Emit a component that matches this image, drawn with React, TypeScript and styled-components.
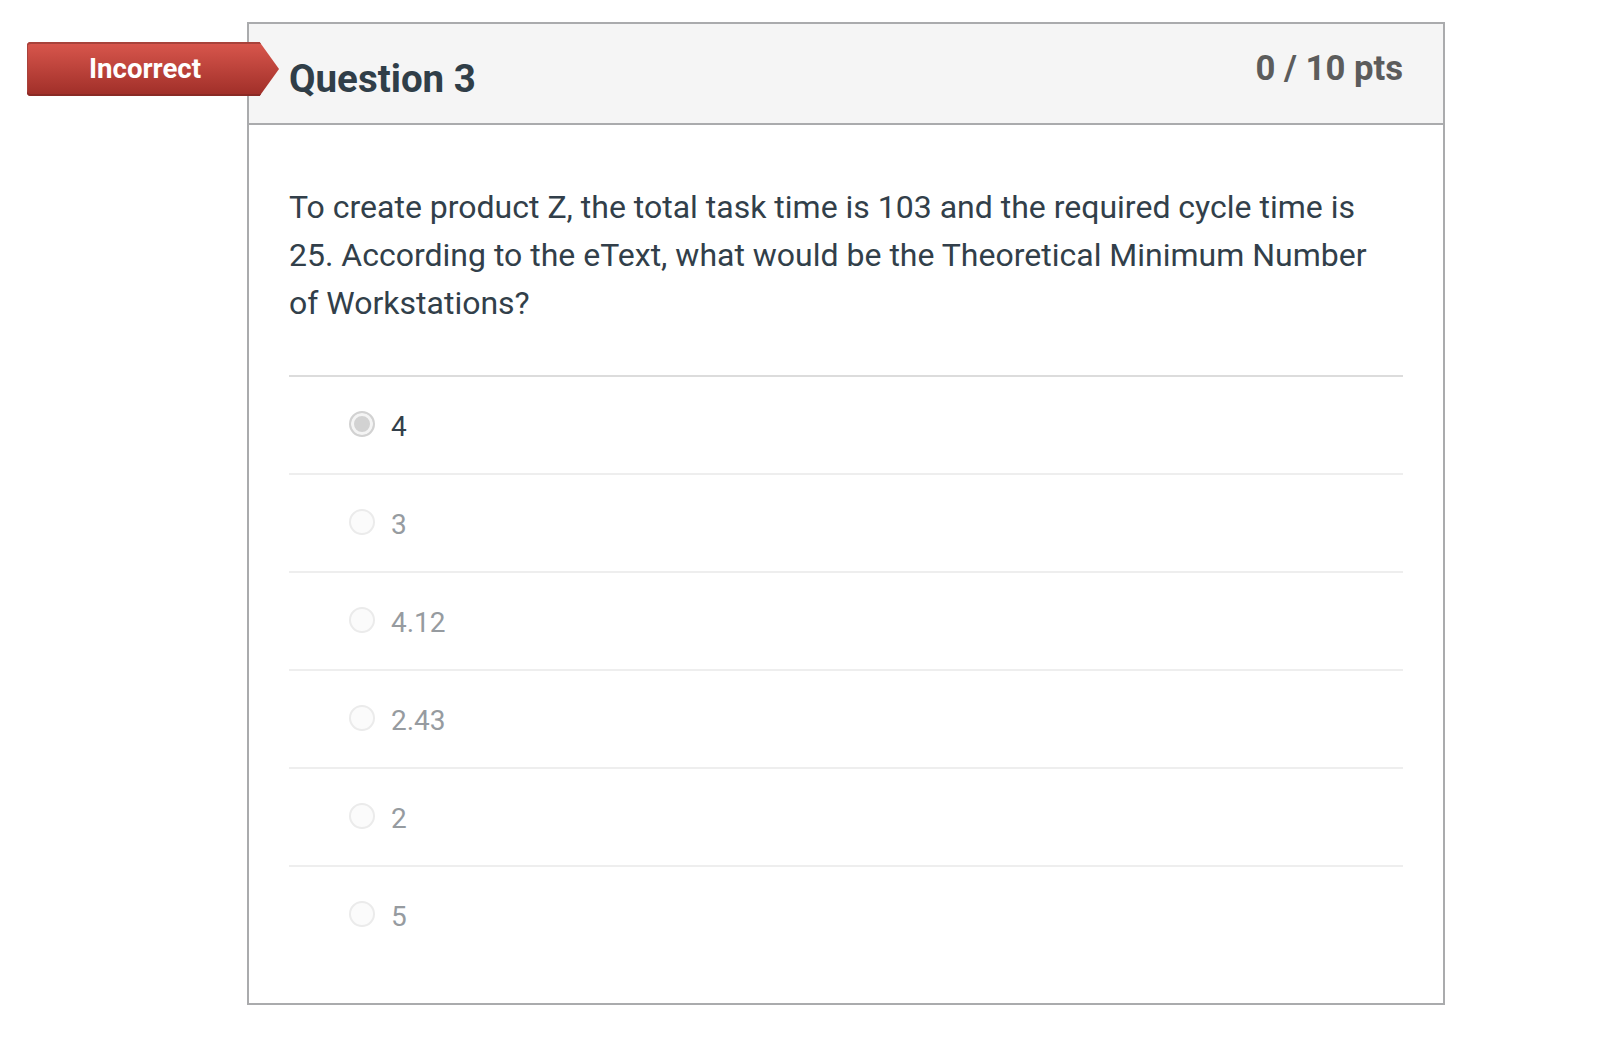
import React from 'react';
import styled, { createGlobalStyle } from 'styled-components';

const answers = [
  { label: '4', selected: true },
  { label: '3' },
  { label: '4.12' },
  { label: '2.43' },
  { label: '2' },
  { label: '5' },
];

const GlobalStyle = createGlobalStyle`
  html, body {
    margin: 0;
    padding: 0;
    background: #fff;
  }
  body {
    font-family: Roboto, "Liberation Sans", sans-serif;
    color: #2d3b45;
  }
`;

const Page = styled.div`
  padding: 22px 0 0 247px;
  width: 1610px;
  height: 1044px;
  box-sizing: border-box;
  overflow: hidden;
`;

const Card = styled.section`
  position: relative;
  box-sizing: border-box;
  width: 1198px;
  height: 983px;
  border: 2px solid #aaabad;
`;

const Header = styled.header`
  display: flex;
  justify-content: space-between;
  box-sizing: border-box;
  height: 101px;
  padding: 0 40px;
  background: #f5f5f5;
  border-bottom: 2px solid #aaabad;
`;

const Title = styled.h2`
  margin: 33px 0 0;
  font-size: 38.5px;
  line-height: 44px;
  font-weight: 700;
  color: #303e48;
`;

const Points = styled.div`
  margin-top: 22px;
  font-size: 34.7px;
  line-height: 44px;
  font-weight: 700;
  color: #5c5c5c;
`;

const Ribbon = styled.div`
  position: absolute;
  left: -222px;
  top: 18px;
  box-sizing: border-box;
  width: 252px;
  height: 54px;
  padding: 0 16px 2px 0;
  display: flex;
  align-items: center;
  justify-content: center;
  font-size: 27.6px;
  font-weight: 700;
  color: #fff;
  background: linear-gradient(#d9574d, #9f2e28);
  border-radius: 4px 0 0 4px;
  box-shadow: inset 0 2px 0 #a8423b, inset 0 -2px 0 #8a2a25, inset 1px 0 0 #a8423b;
  clip-path: polygon(0 0, 92.3% 0, 100% 50%, 92.3% 100%, 0 100%);
`;

const Body = styled.div`
  padding: 58px 40px 0;
`;

const Question = styled.p`
  margin: 0;
  padding-bottom: 48px;
  font-size: 32px;
  line-height: 48px;
  color: #323f4a;
  border-bottom: 2px solid #dcdcdc;
`;

const Row = styled.div`
  display: flex;
  align-items: center;
  box-sizing: border-box;
  height: 98px;
  padding-left: 60px;
  gap: 16px;
  border-bottom: 2px solid #eeeeee;

  &:last-child {
    border-bottom-color: transparent;
  }
`;

const Radio = styled.span<{ $selected?: boolean }>`
  box-sizing: border-box;
  width: 26px;
  height: 26px;
  margin-top: -3px;
  border-radius: 50%;
  border: 2px solid ${(p) => (p.$selected ? '#d2d2d2' : '#ebebeb')};
  background: ${(p) => (p.$selected ? '#d2d2d2' : '#fbfbfb')};
  box-shadow: ${(p) => (p.$selected ? 'inset 0 0 0 3px #f4f4f4' : 'none')};
`;

const Label = styled.span<{ $selected?: boolean }>`
  margin-top: 4px;
  font-size: 28px;
  line-height: 34px;
  color: ${(p) => (p.$selected ? '#323f4a' : '#969ba0')};
`;

export default function App() {
  return (
    <Page>
      <GlobalStyle />
      <Card>
        <Ribbon>Incorrect</Ribbon>
        <Header>
          <Title>Question 3</Title>
          <Points>0 / 10 pts</Points>
        </Header>
        <Body>
          <Question>
            To create product Z, the total task time is 103 and the required cycle time is
            25. According to the eText, what would be the Theoretical Minimum Number
            of Workstations?
          </Question>
          {answers.map((a) => (
            <Row key={a.label}>
              <Radio $selected={a.selected} />
              <Label $selected={a.selected}>{a.label}</Label>
            </Row>
          ))}
        </Body>
      </Card>
    </Page>
  );
}
